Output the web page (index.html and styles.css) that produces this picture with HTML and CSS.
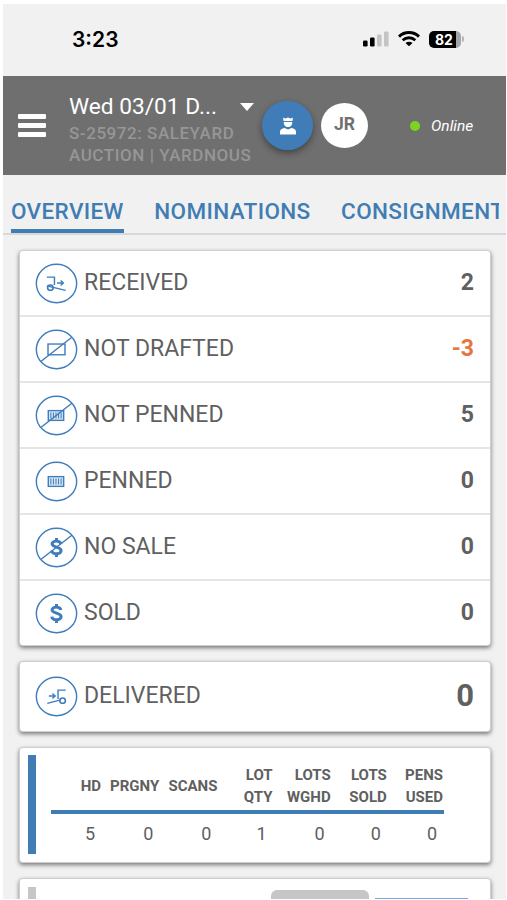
FILE: index.html
```html
<!DOCTYPE html>
<html lang="en">
<head>
    <meta charset="UTF-8">
    <meta name="viewport" content="width=device-width, initial-scale=1.0">
    <title>Saleyard Overview</title>
    <link rel="stylesheet" href="styles.css">
</head>
<body>
    <div class="screen">
        <div class="status-bar">
            <span class="time">3:23</span>
            <div class="status-icons">
                <svg width="26" height="16" viewBox="0 0 26 16">
                    <rect x="0" y="9.5" width="4.6" height="6" rx="1.3" fill="#000"/>
                    <rect x="7" y="6.5" width="4.6" height="9" rx="1.3" fill="#000"/>
                    <rect x="14" y="3.5" width="4.6" height="12" rx="1.3" fill="#c4c4c4"/>
                    <rect x="21" y="0.5" width="4.6" height="15" rx="1.3" fill="#c4c4c4"/>
                </svg>
                <svg class="wifi" width="22" height="16" viewBox="0 0 22 16" fill="none" stroke="#000" stroke-width="2.9">
                    <path d="M1 5.6C6.5 .2 15.500 .2 21 5.600"/>
                    <path d="M4.700 9.300C8.300 5.900 13.700 5.900 17.300 9.300"/>
                    <path d="M11 15.300L7.500 11.900C9.500 10.200 12.500 10.200 14.500 11.900Z" fill="#000" stroke="none"/>
                </svg>
                <div class="battery"><span>82</span></div>
                <div class="battery-tip"></div>
            </div>
        </div>

        <header class="header">
            <div class="menu-btn"><i></i><i></i><i></i></div>
            <div class="sale">
                <div class="sale-title"><span>Wed 03/01 D...</span><b class="caret"></b></div>
                <div class="sale-sub">S-25972: SALEYARD<br>AUCTION | YARDNOUS</div>
            </div>
            <div class="role-btn">
                <svg width="16" height="18" viewBox="0 0 16 18" fill="#fff">
                    <path d="M3 .8L5.500 1.400L8 .4L10.500 1.400L13 .8L12.400 4H3.600Z"/>
                    <path d="M3.700 5H12.300C12.300 8 10.800 10 8 10S3.700 8 3.700 5Z"/>
                    <path d="M0 17.500V15C0 12.500 1.800 11.300 4.500 11L8 12.500L11.500 11C14.200 11.300 16 12.500 16 15V17.500Z"/>
                </svg>
            </div>
            <div class="avatar">JR</div>
            <div class="online"><i></i>Online</div>
        </header>

        <nav class="tabs">
            <div class="tabs-scroll">
                <a class="tab active">OVERVIEW</a>
                <a class="tab">NOMINATIONS</a>
                <a class="tab">CONSIGNMENTS</a>
            </div>
        </nav>

        <main class="content">
            <section class="card">
                <div class="row">
                    <svg class="icon" viewBox="0 0 42 42" preserveAspectRatio="none">
                        <circle cx="21" cy="21" r="19.700"/>
                        <path d="M11.500 14.500H19V22.500M11.500 23.500L30 28M21.500 20.500H27M25 18L27.700 20.500L25 23"/>
                        <circle cx="15" cy="25.300" r="2.700" stroke-width="1.600"/>
                    </svg>
                    <span class="label">RECEIVED</span><span class="value">2</span>
                </div>
                <div class="row">
                    <svg class="icon" viewBox="0 0 42 42" preserveAspectRatio="none">
                        <circle cx="21" cy="21" r="19.700"/>
                        <rect x="12.700" y="15.400" width="16.600" height="11"/>
                        <path d="M6 33L36 8.500"/>
                    </svg>
                    <span class="label">NOT DRAFTED</span><span class="value negative">-3</span>
                </div>
                <div class="row">
                    <svg class="icon" viewBox="0 0 42 42" preserveAspectRatio="none">
                        <circle cx="21" cy="21" r="19.700"/>
                        <rect class="pen" x="13" y="16" width="15" height="10"/>
                        <path class="bars" d="M15.500 18V24M18 18V24M20.500 18V24M23 18V24M25.500 18V24"/>
                        <path d="M6 33L36 8.500"/>
                    </svg>
                    <span class="label">NOT PENNED</span><span class="value">5</span>
                </div>
                <div class="row">
                    <svg class="icon" viewBox="0 0 42 42" preserveAspectRatio="none">
                        <circle cx="21" cy="21" r="19.700"/>
                        <rect class="pen" x="13" y="16" width="15" height="10"/>
                        <path class="bars" d="M15.500 18V24M18 18V24M20.500 18V24M23 18V24M25.500 18V24"/>
                    </svg>
                    <span class="label">PENNED</span><span class="value">0</span>
                </div>
                <div class="row">
                    <svg class="icon" viewBox="0 0 42 42" preserveAspectRatio="none">
                        <circle cx="21" cy="21" r="19.700"/>
                        <path class="dollar" d="M25.300 17.500C24.500 13.400 16.600 13.500 16.700 17.500C16.800 21.400 25.500 20 25.500 24.400C25.400 28.500 16.900 28.500 16.400 24.200M21 11.200V15M21 27V30.800"/>
                        <path d="M6 33L36 8.500"/>
                    </svg>
                    <span class="label">NO SALE</span><span class="value">0</span>
                </div>
                <div class="row">
                    <svg class="icon" viewBox="0 0 42 42" preserveAspectRatio="none">
                        <circle cx="21" cy="21" r="19.700"/>
                        <path class="dollar" d="M25.300 17.500C24.500 13.400 16.600 13.500 16.700 17.500C16.800 21.400 25.500 20 25.500 24.400C25.400 28.500 16.900 28.500 16.400 24.200M21 11.200V15M21 27V30.800"/>
                    </svg>
                    <span class="label">SOLD</span><span class="value">0</span>
                </div>
            </section>

            <section class="card">
                <div class="row delivered">
                    <svg class="icon" viewBox="0 0 42 42" preserveAspectRatio="none">
                        <circle cx="21" cy="21" r="19.700"/>
                        <path d="M30 14.500H22.500V23.500M12 28L25 24.500M13.500 20.500H19M17 18L19.700 20.500L17 23"/>
                        <circle cx="27" cy="25.300" r="2.700" stroke-width="1.600"/>
                    </svg>
                    <span class="label">DELIVERED</span><span class="value">0</span>
                </div>
            </section>

            <section class="card summary">
                <div class="marker"></div>
                <table class="summary-table">
                    <colgroup>
                        <col class="col-hd"><col class="col-wide"><col class="col-wide"><col class="col-qty">
                        <col class="col-wide"><col class="col-lots"><col class="col-lots">
                    </colgroup>
                    <thead>
                        <tr>
                            <th>HD</th><th>PRGNY</th><th>SCANS</th><th>LOT<br>QTY</th>
                            <th>LOTS<br>WGHD</th><th>LOTS<br>SOLD</th><th>PENS<br>USED</th>
                        </tr>
                    </thead>
                    <tbody>
                        <tr><td>5</td><td>0</td><td>0</td><td>1</td><td>0</td><td>0</td><td>0</td></tr>
                    </tbody>
                </table>
            </section>

            <section class="card next">
                <div class="marker"></div>
                <div class="chip"></div>
                <div class="line"></div>
            </section>
        </main>
    </div>
</body>
</html>
```
FILE: styles.css
```css
* {
    margin: 0;
    padding: 0;
    box-sizing: border-box;
}

body {
    background: #fff;
    height: 900px;
    overflow: hidden;
    padding: 4px 1px 1px 3px;
    font-family: Roboto, "Liberation Sans", sans-serif;
    color: #606060;
}

.screen {
    height: 895px;
    background: #f1f1f1;
    overflow: hidden;
}

.status-bar {
    height: 72px;
    display: flex;
    justify-content: space-between;
    padding: 0 42px 0 69px;
}

.time {
    font-family: Inter, sans-serif;
    font-size: 21px;
    font-weight: 600;
    line-height: 71px;
    color: #000;
}

.status-icons {
    display: flex;
    align-items: center;
    height: 70px;
}

.wifi {
    margin: 0 9px 0 9px;
}

.battery {
    width: 32px;
    height: 17px;
    border-radius: 5px;
    background: linear-gradient(90deg, #000 27px, #a5a5a5 27px);
    color: #fff;
    font: bold 14px/17px Inter, sans-serif;
    padding-left: 6px;
}

.battery-tip {
    width: 2px;
    height: 6px;
    margin-left: 1px;
    border-radius: 0 2px 2px 0;
    background: #b5b5b5;
}

.header {
    height: 99px;
    background: #6f6f6f;
    display: flex;
    color: #fff;
    padding-left: 15px;
}

.menu-btn {
    width: 28px;
    padding-top: 38px;
}

.menu-btn i {
    display: block;
    height: 5px;
    border-radius: 1px;
    background: #fff;
    margin-bottom: 4px;
}

.sale {
    width: 190px;
    margin-left: 23px;
    padding-top: 16px;
}

.sale-title {
    display: flex;
    justify-content: space-between;
    align-items: center;
    height: 29px;
    font-size: 22.7px;
    padding-right: 5px;
}

.caret {
    border: 7px solid transparent;
    border-top: 8px solid #fff;
    border-bottom: 0;
}

.sale-sub {
    font-size: 17px;
    font-weight: 500;
    line-height: 22px;
    letter-spacing: 0.55px;
    color: #969696;
    margin-top: 1px;
    white-space: nowrap;
}

.role-btn {
    width: 51px;
    height: 49px;
    margin: 25px 0 0 3px;
    border-radius: 50%;
    background: #407db8;
    box-shadow: 0 3px 7px rgba(0, 0, 0, 0.4);
    display: flex;
    align-items: center;
    justify-content: center;
}

.avatar {
    width: 47px;
    height: 45px;
    margin: 27px 0 0 8px;
    border-radius: 50%;
    background: #fff;
    color: #6f6f6f;
    font-size: 17.5px;
    font-weight: bold;
    line-height: 43px;
    text-align: center;
}

.online {
    display: flex;
    align-items: center;
    height: 99px;
    margin-left: 42px;
    font-size: 15.5px;
    font-style: italic;
}

.online i {
    width: 10px;
    height: 10px;
    margin-right: 11px;
    border-radius: 50%;
    background: #7ed321;
}

.tabs {
    height: 60px;
    border-bottom: 2px solid #d6d8da;
    padding: 0 7px 0 8px;
}

.tabs-scroll {
    display: flex;
    gap: 30.5px;
    height: 58px;
    overflow: hidden;
}

.tab {
    flex: none;
    height: 58px;
    font-size: 22.5px;
    font-weight: 500;
    line-height: 73px;
    letter-spacing: 0.36px;
    color: #407db3;
}

.tab.active {
    border-bottom: 4px solid #407db3;
}

.content {
    padding: 16px 16px 0 17px;
}

.card {
    background: #fff;
    border-radius: 3px;
    margin-bottom: 17px;
    box-shadow: 0 0 0 1px #cfcfcf, 0 2px 4px 1px rgba(0, 0, 0, 0.5);
}

.row {
    display: flex;
    align-items: center;
    height: 66px;
    padding: 0 16px 2px 15px;
    border-bottom: 2px solid #e5e5e5;
}

.row:last-child {
    height: 64px;
    border-bottom: 0;
}

.row.delivered {
    height: 69px;
}

.icon {
    width: 43px;
    height: 41px;
    margin-top: 2px;
    fill: none;
    stroke: #407dbb;
    stroke-width: 1.4;
}

.icon .pen {
    fill: #d6e5f3;
}

.icon .bars {
    stroke-width: 1;
}

.icon .dollar {
    stroke-width: 3;
}

.label {
    flex: 1;
    margin-left: 6px;
    font-size: 23px;
}

.value {
    font-size: 23px;
    font-weight: bold;
}

.value.negative {
    color: #e5763f;
}

.delivered .value {
    font-size: 31px;
}

.summary {
    display: flex;
    height: 114px;
    padding: 7px 8px;
}

.marker {
    width: 8px;
    height: 99px;
    background: #407db5;
}

.summary-table {
    width: 393px;
    height: 97px;
    margin-left: 15px;
    border-collapse: collapse;
    table-layout: fixed;
}

.col-hd {
    width: 51px;
}

.col-wide {
    width: 58px;
}

.col-qty {
    width: 55px;
}

.col-lots {
    width: 56px;
}

.summary-table th {
    height: 57px;
    padding: 6px 1px 0 0;
    border-bottom: 4px solid #407db5;
    font-size: 15px;
    font-weight: bold;
    line-height: 22px;
    text-align: right;
    white-space: nowrap;
}

.summary-table td {
    font-size: 18px;
    text-align: right;
    padding-right: 7px;
}

.next {
    display: flex;
    height: 50px;
    padding: 8px;
}

.next .marker {
    background: #c6c6c6;
}

.chip {
    width: 98px;
    height: 30px;
    margin: 3px 0 0 235px;
    border-radius: 6px;
    background: #c6c6c6;
}

.line {
    width: 93px;
    height: 2px;
    margin: 11px 0 0 6px;
    background: #7ea6d4;
}
```
